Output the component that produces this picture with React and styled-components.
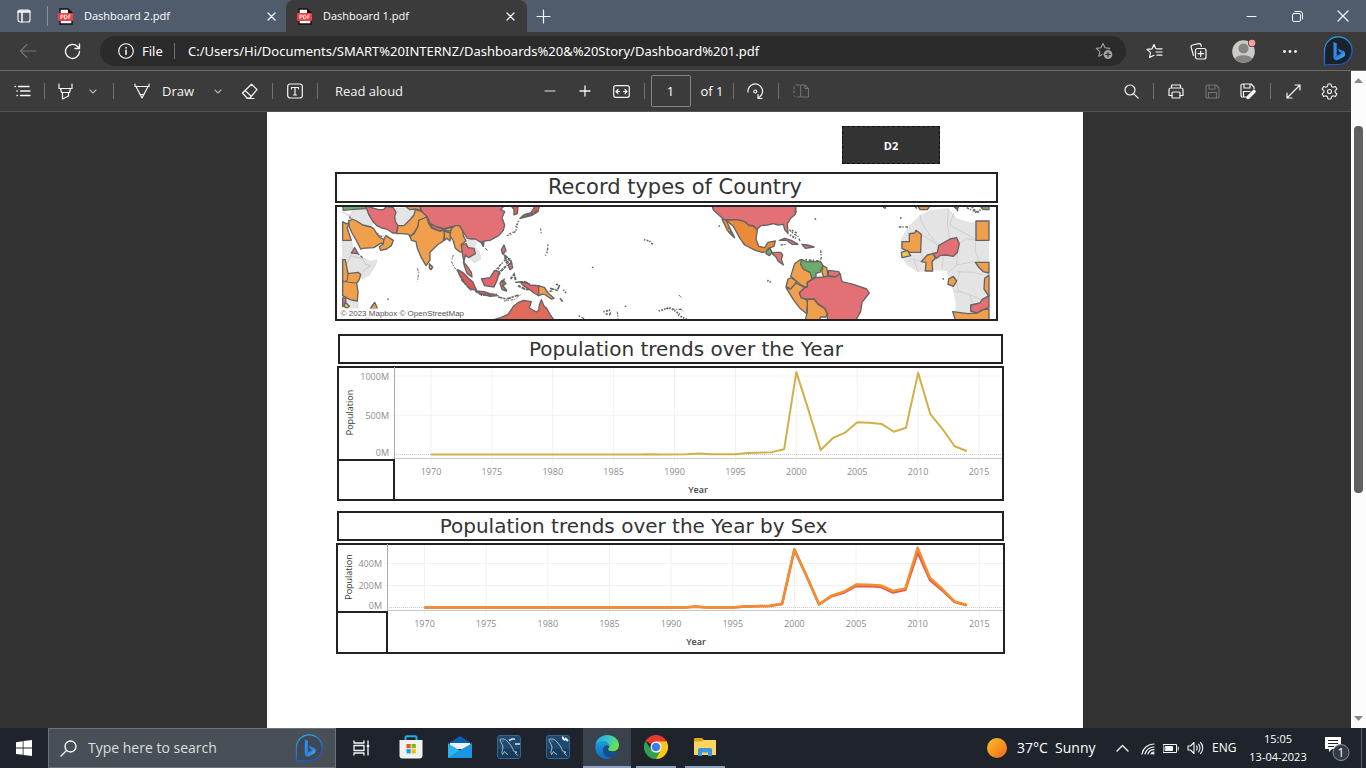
import React from "react";
import styled, { createGlobalStyle } from "styled-components";

const GlobalStyle = createGlobalStyle`
  *, *::before, *::after { box-sizing: border-box; }
  body { margin: 0; background: #323232; overflow: hidden; }
  button, input { font: inherit; color: inherit; }
`;

const Shell = styled.div`
  display: flex;
  flex-direction: column;
  height: 100vh;
  font-family: "Open Sans", "Noto Sans", sans-serif;
  font-size: 13px;
  line-height: 20px;
  color: #fff;
`;

const Button = styled.button`
  display: flex;
  align-items: center;
  justify-content: center;
  flex: none;
  width: ${(p) => p.$w || 44}px;
  height: 100%;
  padding: 0;
  border: 0;
  background: none;
  color: ${(p) => (p.disabled ? "#747474" : "#f4f4f4")};
`;

const Divider = styled.span`
  flex: none;
  width: 1px;
  height: ${(p) => p.$h || 16}px;
  background: ${(p) => p.$c || "#717171"};
`;

/* ---------- tabs ---------- */

const TabStrip = styled.header`
  display: flex;
  align-items: center;
  flex: none;
  height: 32px;
  background: #505c6b;
`;

const Tab = styled.div`
  display: flex;
  align-items: center;
  width: ${(p) => (p.$active ? 241 : 238)}px;
  height: 32px;
  padding-left: ${(p) => (p.$active ? 11 : 10)}px;
  font-size: 11px;
  border-radius: 8px 8px 0 0;
  background: ${(p) => (p.$active ? "#3b3b3b" : "transparent")};
`;

const TabTitle = styled.span`
  flex: 1;
  padding-left: 11px;
  white-space: nowrap;
`;

const WindowControls = styled.div`
  display: flex;
  height: 100%;
  margin-left: auto;
`;

/* ---------- address bar ---------- */

const AddressBar = styled.nav`
  display: flex;
  align-items: center;
  flex: none;
  height: 39px;
  padding: 0 2px 0 6px;
  background: #3b3b3b;
  border-bottom: 1px solid #6a6a6a;
`;

const AddressPill = styled.div`
  display: flex;
  align-items: center;
  flex: 1;
  height: 30px;
  margin: 0 6px;
  padding-left: 18px;
  border-radius: 15px;
  background: #2b2b2b;
  font-family: "Noto Sans", "Open Sans", sans-serif;
`;

const Scheme = styled.span`
  width: 40px;
  padding-left: 8px;
`;

const UrlInput = styled.input`
  flex: 1;
  min-width: 0;
  padding: 0 0 0 13px;
  border: 0;
  outline: 0;
  background: none;
`;

/* ---------- viewer ---------- */

const Main = styled.main`
  display: flex;
  flex: 1;
  min-height: 0;
`;

const Viewer = styled.div`
  display: flex;
  flex-direction: column;
  flex: 1;
  min-width: 0;
`;

const Toolbar = styled.div`
  display: grid;
  grid-template-columns: 1fr auto 1fr;
  flex: none;
  height: 41px;
  background: #3b3b3b;
  border-bottom: 1px solid #555;
`;

const ToolGroup = styled.div`
  display: flex;
  align-items: center;
  justify-content: ${(p) => (p.$end ? "flex-end" : "flex-start")};
  padding-right: ${(p) => (p.$end ? 8 : 0)}px;
`;

const DrawButton = styled(Button)`
  justify-content: flex-start;
  gap: 12px;
  padding-left: 20px;
`;

const ChevronButton = styled(Button)`
  width: 16px;
  color: #b5b5b5;
  margin-right: ${(p) => (p.$gap ? 12 : 0)}px;
`;

const PageInput = styled.input`
  width: 40px;
  height: 32px;
  margin-left: 6px;
  padding: 0;
  text-align: center;
  border: 1px solid #858585;
  border-radius: 2px;
  outline: 0;
  background: none;
`;

const PageCount = styled.span`
  width: 42px;
  padding-left: 10px;
`;

const Canvas = styled.div`
  flex: 1;
  min-height: 0;
  overflow: hidden;
  padding-right: 1px;
  background: #323232;
`;

const Paper = styled.article`
  display: flex;
  flex-direction: column;
  align-items: flex-start;
  width: 816px;
  min-height: 100%;
  margin: 0 auto;
  padding: 14px 78px 0 68px;
  background: #fff;
`;

const ScrollTrack = styled.div`
  display: flex;
  flex-direction: column;
  align-items: center;
  flex: none;
  width: 15px;
  padding: 7px 0;
  background: #fcfcfc;
`;

const ScrollThumb = styled.div`
  width: 9px;
  height: 57%;
  margin: 43px 0 auto;
  border-radius: 4px;
  background: #606060;
`;

/* ---------- dashboard ---------- */

const LinkTile = styled.button`
  width: 98px;
  height: 38px;
  margin: 0 65px 8px 0;
  padding-top: 2px;
  align-self: flex-end;
  border: 1px dashed #111;
  background: #333;
  color: #fff;
  font-size: 11px;
  font-weight: 700;
`;

const Panel = styled.section`
  width: ${(p) => p.$w}px;
  margin: 0 0 ${(p) => p.$after}px ${(p) => p.$indent || 0}px;
`;

const PanelTitle = styled.h2`
  height: ${(p) => p.$h || 30}px;
  margin: 0 ${(p) => p.$inset || 0}px 2px;
  padding: 0 ${(p) => p.$right || 0}px 0 ${(p) => p.$left || 0}px;
  border: 2px solid #222;
  font-family: "DejaVu Sans", sans-serif;
  font-size: ${(p) => (p.$large ? 21 : 20)}px;
  font-weight: 400;
  line-height: 26px;
  text-align: center;
  white-space: nowrap;
  color: #333;
`;

const MapFrame = styled.div`
  border: 2px solid #222;
  svg { display: block; width: 100%; height: auto; }
`;

const ChartSvg = styled.svg`
  display: block;
  width: 100%;
  height: auto;
  font-family: "Open Sans", "Noto Sans", sans-serif;
  font-size: 9px;
`;

/* ---------- taskbar ---------- */

const Taskbar = styled.footer`
  display: flex;
  align-items: center;
  flex: none;
  height: 40px;
  background: #1f242c;
`;

const SearchBox = styled.label`
  display: flex;
  align-items: center;
  width: 288px;
  height: 40px;
  padding: 0 12px 0 11px;
  border: 1px solid #6c7178;
  background: #484f57;
`;

const SearchInput = styled.input`
  flex: 1;
  min-width: 0;
  padding: 0 0 0 11px;
  border: 0;
  outline: 0;
  background: none;
  font-size: 14px;
  &::placeholder { color: #dcdedf; opacity: 1; }
`;

const AppCell = styled.button`
  display: grid;
  grid-template-rows: 38px 2px;
  justify-items: center;
  align-items: center;
  width: 48px;
  height: 40px;
  margin-right: 1px;
  padding: 0;
  border: 0;
  background: ${(p) => (p.$active ? "#3a424e" : "none")};
  &::after {
    content: "";
    width: ${(p) => (p.$active ? 48 : 40)}px;
    height: 2px;
    background: ${(p) => (p.$running ? "#8ea3c0" : "transparent")};
  }
`;

const Tray = styled.div`
  display: flex;
  align-items: center;
  height: 100%;
  margin-left: auto;
  padding-right: 4px;
`;

const Weather = styled.button`
  display: flex;
  align-items: center;
  gap: 10px;
  width: 121px;
  padding: 0;
  border: 0;
  background: none;
  font-size: 14px;
  white-space: nowrap;
`;

const Clock = styled.time`
  width: 70px;
  font-size: 11px;
  line-height: 18px;
  text-align: center;
`;

const Lang = styled.span`
  width: 36px;
  padding-left: 5px;
  font-size: 12px;
`;

/* ---------- icons ---------- */

const Ico = ({ w = 16, h, sw = 1, children, vb }) => (
  <svg width={w} height={h || w} viewBox={vb || `0 0 ${w} ${h || w}`} fill="none" stroke="currentColor" strokeWidth={sw} strokeLinecap="round" strokeLinejoin="round" aria-hidden="true">
    {children}
  </svg>
);

const Pdf = () => (
  <svg width="15" height="17" viewBox="0 0 15 17" aria-hidden="true">
    <path d="M2 1h8l4 4v11H2z" fill="#fff" stroke="#111" strokeWidth="1.4" />
    <path d="M10 1v4h4z" fill="#111" />
    <rect x="0" y="5" width="15" height="8" rx="1" fill="#f23f43" />
    <path d="M3 11V7h1.2a1.1 1.1 0 0 1 0 2.3H3M6.6 7v4h.7a1.8 2 0 0 0 0-4zM12.5 7H10.800v4M10.800 9h1.500" fill="none" stroke="#fff" strokeWidth=".9" />
  </svg>
);
const Close = ({ s = 9 }) => <Ico w={s} sw={1.3}><path d={`M1 1 ${s - 1} ${s - 1}M${s - 1} 1 1 ${s - 1}`} /></Ico>;
const Chevron = () => <Ico w={8} h={5} sw={1.1}><path d="M1 1l3 3 3-3" /></Ico>;

const Bing = ({ s = 30, fill = "#1c222b" }) => (
  <svg width={s} height={s} viewBox="0 0 30 30" aria-hidden="true">
    <defs>
      <linearGradient id="ring" x1="0" y1="0" x2=".4" y2="1"><stop offset="0" stopColor="#27b5e8" /><stop offset="1" stopColor="#1c55d8" /></linearGradient>
      <linearGradient id="bee" x1="0" y1="0" x2="1" y2="1"><stop offset="0" stopColor="#2d9cf4" /><stop offset=".5" stopColor="#2a7bea" /><stop offset="1" stopColor="#39dfd0" /></linearGradient>
    </defs>
    <path d="M1.500 29V15A13.800 13.800 0 1 1 15 28.500H8C6 28.500 4 29 1.500 29z" fill={fill} stroke="url(#ring)" strokeWidth="1.2" />
    <path d="M10.500 6l3.200 1.200v12.600l-3.200 2z" fill="#2e8df2" />
    <path d="M10.500 21.500l3.500-2 4.500-2.300-2.200-1.100-1.400-3.400 5.700 2.200c1.900 1 2.100 4.300.3 5.800l-6.400 3.300c-1.900.8-4-.5-4-2.500z" fill="url(#bee)" />
  </svg>
);

const MySql = ({ tool }) => (
  <svg width="24" height="24" viewBox="0 0 24 24" fill="none" aria-hidden="true">
    <rect x=".5" y=".5" width="23" height="23" rx="2.500" fill="#1e4a70" stroke="#34658f" />
    <path d="M1 14h22v7a2 2 0 0 1-2 2H3a2 2 0 0 1-2-2z" fill="#183b5b" />
    <path d="M3 4.500c3-1.500 6 0 8 2.500 2.500 3 4.500 5 5.500 9l3.500 1.200-2 .6 3 3M3 4.500c0 3 2.500 4 3 7.500.2 3-2 4.500-.5 7.500.800-.8 1.500-2 2-3 .8 1.500 2 2.500 3.500 3M5.500 5.800l1 .5" stroke="#b5c9d8" strokeWidth=".9" />
    {tool === "wrench"
      ? <path d="M22 6l-3-3M17 1.500c-.5 2 .5 3.500 2.500 3.200" stroke="#f5f8fa" strokeWidth="1.800" />
      : <path d="M12 5.500l3-1.500h3M18 9h5" stroke="#dce6ee" strokeWidth="1.700" />}
  </svg>
);

const Edge = () => (
  <svg width="24" height="24" viewBox="0 0 24 24" aria-hidden="true">
    <defs>
      <linearGradient id="e1" x1="0" y1="0" x2="1" y2=".4"><stop offset="0" stopColor="#22a2e0" /><stop offset=".55" stopColor="#34c6c4" /><stop offset="1" stopColor="#6be04f" /></linearGradient>
      <linearGradient id="e2" x1="0" y1="0" x2="0" y2="1"><stop offset="0" stopColor="#1b9de2" /><stop offset="1" stopColor="#1169b8" /></linearGradient>
    </defs>
    <path d="M.6 9C2 3.500 6.500 0 12 0c7 0 12 4.500 12 10 0 4-3 6.300-6.500 6.300-3 0-4.500-1-4.500-2 0-.7 1.300-1.300 1.300-3C14.300 8.500 11.500 7 9 7 4.500 7 1 9.500.6 9z" fill="url(#e1)" />
    <path d="M.2 11C1 8 4.500 5.500 9 6c3 .4 5.300 2.700 5.300 5.300C11 9.500 8 12 8 15.200c0 5 5 8.800 10 6.800C12 26.500 0 23.500.2 11z" fill="url(#e2)" />
    <path d="M8 15.200c0-3 2-5 4.500-5-.8 1.500-1.200 3.500.5 5.300 2.500 3 7 2.500 9.800.3.500-.3.800.1.500.6C20 23 8.500 24.500 8 15.200z" fill="#124f95" />
  </svg>
);

const Chrome = () => (
  <svg width="24" height="24" viewBox="0 0 24 24" aria-hidden="true">
    <path d="M12 12L1.600 6A12 12 0 0 1 22.400 6z" fill="#e33b2e" />
    <path d="M12 12L22.400 6A12 12 0 0 1 12 24z" fill="#fcc61a" />
    <path d="M12 6.600h10.700L16.800 14.800zM12 24l5-9.200-5 2.700z" fill="#fcc61a" />
    <path d="M1.600 6l5.600 8.800L12 17.400 16 17l-4 7A12 12 0 0 1 1.600 6z" fill="#30a350" />
    <circle cx="12" cy="12" r="5.500" fill="#fff" />
    <circle cx="12" cy="12" r="4.300" fill="#3b7ded" />
  </svg>
);

const Gear = () => (
  <Ico w={17} sw={1.1}>
    <path d="M7 1h3l.5 2.400 1.500.9 2.400-.8 1.500 2.600-1.800 1.600v1.700l1.800 1.600-1.500 2.600-2.400-.8-1.500.9L10 16H7l-.5-2.300-1.500-.9-2.400.8-1.500-2.600 1.800-1.600V7.700L1.100 6.100l1.500-2.600 2.400.8 1.500-.9z" />
    <circle cx="8.500" cy="8.500" r="2" />
  </Ico>
);

/* ---------- world map ---------- */

const OR = "#f09f4c";
const RED = "#e27075";
const GREEN = "#6cab69";
const GREY = "#e4e4e4";

const westLand = [
  [GREEN, "38,123 107,123 108,131 72,133 40,136"],
  [OR, "38,170 48,176 56,174 52,190 64,226 38,226"],
  [OR, "56,170 66,162 80,168 98,180 124,186 132,192 140,206 150,218 160,222 162,234 150,236 132,248 98,250 92,252 80,228 66,204 58,186"],
  [OR, "162,222 168,212 190,226 184,242 170,252 152,256 148,246 160,236"],
  [RED, "107,123 112,124 132,130 146,134 160,134 170,124 190,128 198,142 194,155 196,170 204,182 200,204 188,204 170,192 158,190 140,182 128,168 116,148"],
  [OR, "204,182 222,182 236,168 242,162 252,150 256,134 276,140 290,150 288,160 268,166 266,180 252,204 240,216 236,208 216,206 200,206"],
  ["#e99845", "226,123 270,123 272,136 256,132 240,134 232,128"],
  ["#e27075", "270,123 522,123 512,134 524,140 516,158 524,180 520,196 506,212 480,226 462,228 452,232 436,222 424,222 412,220 398,198 388,182 368,184 342,192 320,186 300,176 292,156 276,140"],
  [OR, "266,166 290,156 296,176 306,190 330,198 344,196 344,210 340,228 322,240 300,262 300,286 288,302 274,278 262,250 258,230 244,226 240,214 252,206 264,184"],
  [RED, "300,176 320,186 342,192 330,198 306,188"],
  [OR, "342,198 362,204 360,228 350,220 344,226"],
  [OR, "344,192 366,186 364,198 350,198"],
  [OR, "364,190 376,182 388,182 398,198 400,212 408,228 394,238 402,256 400,262 388,260 376,250 370,228 360,212"],
  [RED, "394,240 408,236 414,248 432,250 436,266 416,278 406,270 402,290 398,272"],
  [RED, "400,290 410,302 424,322 426,336 412,326 404,306"],
  ["#e0575c", "382,314 398,322 414,338 428,350 440,376 420,372 404,352 390,332"],
  ["#e0575c", "438,378 462,380 480,386 504,392 480,394 450,386"],
  ["#e2656a", "454,342 480,338 494,316 508,320 502,344 492,366 464,362"],
  [RED, "510,354 520,346 528,356 518,362 530,378 516,374"],
  [RED, "514,254 522,240 528,258 518,266"],
  [RED, "534,300 544,292 548,308 540,314"],
  [RED, "454,234 462,232 460,244"],
  ["#e2656a", "570,350 592,354 600,360 626,362 626,392 612,384 596,372 580,362"],
  [OR, "626,362 644,368 652,382 672,400 664,402 644,388 636,388 626,392"],
  ["#e16b5a", "488,465 512,458 534,448 550,424 566,412 580,406 604,410 598,429 620,441 626,436 628,420 634,404 642,423 650,430 660,448 672,465"],
  ["#e0624f", "544,123 564,123 562,146 552,150 552,134"],
  ["#e0624f", "570,160 584,148 602,144 612,130 612,123 628,123 624,140 604,152 580,158"],
  [OR, "38,284 46,284 54,326 84,322 92,328 88,344 80,354 84,380 82,408 60,404 38,392"],
  [RED, "64,264 74,248 84,266"],
  [RED, "38,398 48,400 46,420 38,424"],
  ["#e5c44e", "46,412 58,424 50,430 42,424"],
  [OR, "120,432 134,412 142,430"],
  [OR, "104,463 112,458 130,465"],
  [OR, "298,296 308,306 304,314 298,310"],
];

const westGrey = [
  "40,142 60,150 70,134 108,130 118,150 132,172 124,184 98,178 66,162",
  "198,130 232,128 256,134 252,150 240,165 222,182 200,180 194,155",
  "408,228 430,222 440,236 434,244 448,262 452,282 432,294 420,280 436,266 432,250 414,248",
  "38,228 64,228 70,250 62,268 84,266 98,278 122,290 140,284 136,302 118,330 96,342 84,322 54,326 38,284",
  "38,408 84,408 84,430 38,430",
];

const borderLines = [
  "38,348 58,352 80,354", "54,326 52,346 38,352", "346,440 352,465",
];

const eastLand = [
  [RED, "66,123 318,123 316,148 302,160 292,176 294,206 284,194 280,178 264,180 250,176 232,180 212,182 200,194 190,182 176,180 164,170 140,164 102,164 84,148 70,134"],
  ["#eb8a38", "96,163 108,164 120,190 134,218 124,210 112,196"],
  ["#eb8a38", "108,166 140,164 164,170 178,182 192,184 202,196 198,222 206,244 224,248 234,232 256,228 252,244 234,250 232,260 216,262 196,256 164,240 150,220 130,184"],
  [GREEN, "230,256 240,250 246,262 238,272 228,266"],
  [RED, "244,264 256,262 272,262 278,270 274,284 280,300 264,288 258,276"],
  [RED, "268,226 284,220 304,226 324,238 306,238 290,226"],
  [RED, "336,238 352,240 372,246 346,250"],
  [OR, "314,296 330,284 340,286 334,298 340,312 360,322 374,338 352,352 352,368 336,362 316,346 302,334"],
  [GREEN, "334,284 350,290 392,290 400,304 390,322 378,324 378,338 366,340 360,322 340,312 332,298"],
  [OR, "398,302 410,308 414,332 402,338 396,322"],
  [RED, "416,316 446,320 452,330 436,336 414,332"],
  [OR, "294,342 304,338 318,348 318,356 302,372 288,364"],
  [OR, "288,368 302,372 318,354 334,362 344,368 328,384 334,398 346,402 354,410 350,446 330,430 310,404"],
  [OR, "352,404 372,402 384,418 404,430 412,446 408,456 392,456 388,465 346,465 352,440"],
  [RED, "328,384 344,368 352,366 352,352 376,338 400,336 416,334 436,336 450,326 456,350 490,358 530,372 538,384 516,412 512,440 498,465 412,465 412,444 404,430 384,416 372,402 346,402 334,398"],
  [OR, "636,230 658,230 658,206 674,204 678,196 694,208 692,262 660,262 636,250"],
  ["#e8c752", "634,262 652,256 662,272 636,278"],
  [RED, "726,266 742,262 746,242 780,222 800,218 808,236 802,262 790,274 768,270 750,272 740,280"],
  [OR, "694,290 712,270 730,266 736,280 726,290 728,318 706,318 708,292"],
  [OR, "858,168 897,168 897,226 858,226"],
  [OR, "776,342 790,334 800,348 790,364 774,358"],
  [OR, "856,292 897,292 897,324 880,320 866,306"],
  [OR, "884,340 897,330 897,394 882,372"],
  [RED, "842,420 870,414 876,404 897,392 897,428 880,434 862,444 842,438"],
  [OR, "788,440 834,446 862,444 880,434 897,432 897,465 796,465"],
  ["#e99845", "684,123 720,123 712,134 690,134"],
  [RED, "790,123 806,123 802,134"],
  [GREEN, "870,123 897,123 897,134 880,134"],
];

const africaLines = [
  "690,150 694,170 720,212 746,242", "775,132 772,180 780,222", "790,146 780,180 856,222", "858,170 856,260 870,292",
  "694,208 746,242", "692,262 700,280", "808,236 830,220 856,226", "802,262 800,300 776,322", "760,276 756,310", "800,300 850,290",
  "800,320 850,322 880,330", "800,350 806,378 840,390 846,412", "790,380 816,382", "840,390 876,404", "810,320 800,350",
  "834,446 866,465", "654,290 670,280 684,320", "672,284 700,290",
];

const islandChains = [
  "384,318 396,346 410,362 424,376", "436,378 456,390 500,388", "504,396 530,402 548,396 566,390",
  "516,262 530,278 544,290", "522,270 542,284 546,300", "528,290 540,298", "524,276 530,292 540,284",
  "506,330 512,318 532,300", "512,350 522,344 518,362 530,376", "542,342 552,328 558,348", "556,352 584,350 600,358",
  "564,362 584,372 600,374", "660,370 682,376 688,362 676,356", "576,156 604,148 622,138", "690,400 698,410",
];

const specks = [
  "370,270 364,288 372,306 382,318", "500,312 520,290 530,280", "498,318 508,308",
  "522,408 552,404 576,386", "538,206 556,200 562,186", "566,168 556,190", "530,212 548,208",
  "648,380 668,378", "700,374 708,384", "632,190 634,206", "654,238 652,260 646,272", "942,224 958,228 970,240",
  "1046,390 1056,398", "746,452 764,462", "820,440 838,436 842,450 824,446", "862,440 864,462", "884,424 892,424",
  "986,438 1020,428 1050,448", "1006,430 1028,432 1054,434", "786,306 792,310", "1044,450 1072,464", "1050,430 1060,440",
  "142,204 148,212 160,216", "56,168 62,152", "262,310 266,322 262,350", "84,266 98,278", "172,402 176,404", "466,250 474,258",
];

const eastSpecks = [
  "298,194 310,206 324,214 330,228", "306,196 320,204", "300,210 318,220", "392,256 394,278 390,288", "346,284 386,288", "318,236 324,238",
  "374,160 378,164", "570,123 590,130", "232,346 242,352", "626,186 654,186", "630,160 636,158", "846,126 860,144 876,130", "830,128 846,136 864,140",
  "116,188 130,214", "86,182 90,186", "272,240 288,238", "758,340 764,346", "316,130 318,146", "676,124 682,134", "796,126 804,138",
];

const Land = ({ items }) => items.map(([fill, points], i) => <polygon key={i} points={points} fill={fill} stroke="#646464" strokeWidth="4" strokeLinejoin="round" />);
const Specks = ({ items, weight = 3 }) => items.map((points, i) => <polyline key={i} points={points} fill="none" stroke="#666" strokeWidth={weight + (i % 3)} strokeDasharray={["8 3 4 5", "5 5 9 3", "4 4 6 3"][i % 3]} />);
const Islands = ({ items }) => items.map((points, i) => <polyline key={i} points={points} fill="none" stroke="#666" strokeWidth={5 + (i % 2)} strokeDasharray={["14 2 7 3", "9 3 12 2"][i % 2]} />);

const WorldMap = () => (
  <svg viewBox="21 126 1977 336" role="img" aria-label="Record types of Country map">
    {westGrey.map((p) => <polygon key={p} points={p} fill={GREY} stroke="#d3d3d3" strokeWidth="2" />)}
    <polyline points="50,300 62,272 98,282 106,298 122,302 98,320" fill="none" stroke="#b9b9b9" strokeWidth="2" />
    <Land items={westLand} />
    {borderLines.map((p) => <polyline key={p} points={p} fill="none" stroke="#646464" strokeWidth="3" />)}
    <Islands items={islandChains} />
    <Specks items={specks} />
    <g transform="translate(1080 0)">
      <polygon points="632,224 650,190 690,150 720,136 775,130 790,146 800,160 840,172 897,170 897,465 790,465 798,420 790,380 776,340 770,318 720,314 684,322 650,300 632,272" fill={GREY} />
      {africaLines.map((p) => <polyline key={p} points={p} fill="none" stroke="#c4c4c4" strokeWidth="2" />)}
      <Land items={eastLand} />
      <Specks items={eastSpecks} weight={4} />
    </g>
    <rect x="21" y="430" width="386" height="34" fill="#fff" fillOpacity=".8" />
    <text x="32" y="453" fontFamily="Liberation Sans, sans-serif" fontSize="24" fill="#555">© 2023 Mapbox © OpenStreetMap</text>
  </svg>
);

/* ---------- line charts ---------- */

const YEARS = [1970, 1975, 1980, 1985, 1990, 1995, 2000, 2005, 2010, 2015];

const total = [[1970, 0], [1987, 0], [1988, 3], [1989, 0], [1991, 2], [1992, 14], [1993, 3], [1995, 3], [1996, 20], [1998, 30], [1999, 68], [2000, 1050], [2001, 565], [2002, 58], [2003, 210], [2004, 278], [2005, 410], [2006, 405], [2007, 390], [2008, 290], [2009, 340], [2010, 1040], [2011, 515], [2012, 325], [2013, 105], [2014, 45]];
const male = [[1970, 0], [1991, 0], [1992, 8], [1993, 1], [1995, 1], [1996, 10], [1998, 15], [1999, 34], [2000, 530], [2001, 285], [2002, 29], [2003, 107], [2004, 143], [2005, 208], [2006, 206], [2007, 200], [2008, 150], [2009, 174], [2010, 542], [2011, 268], [2012, 168], [2013, 54], [2014, 22]];
const female = [[1970, 0], [1991, 0], [1992, 6], [1993, 1], [1995, 1], [1996, 9], [1998, 14], [1999, 32], [2000, 524], [2001, 282], [2002, 27], [2003, 102], [2004, 134], [2005, 196], [2006, 194], [2007, 188], [2008, 136], [2009, 160], [2010, 500], [2011, 250], [2012, 155], [2013, 50], [2014, 20]];

function LineChart({ width, height, axisX, split, x0, step, zero, scale, ticks, yearX, series, label, stroke }) {
  const px = (y) => x0 + (y - 1970) * step;
  const py = (v) => zero - v * scale;
  return (
    <ChartSvg viewBox={`0 0 ${width} ${height}`} role="img" aria-label={label}>
      {YEARS.map((y) => <line key={y} x1={px(y)} x2={px(y)} y1="2" y2={split + 4} stroke="#f1f1f1" strokeWidth="1" />)}
      {ticks.slice(1).map((t) => <line key={t} x1={axisX - 3} x2={width - 2} y1={py(t)} y2={py(t)} stroke="#f1f1f1" />)}
      <line x1={axisX} x2={width - 2} y1={zero} y2={zero} stroke="#ccc" strokeDasharray="1 1" />
      <rect x="1" y="1" width={width - 2} height={height - 2} fill="none" stroke="#222" strokeWidth="2" />
      <path d={`M1 ${split + 1}H${axisX}V${height - 1}`} fill="none" stroke="#222" strokeWidth="2" />
      <path d={`M${axisX} ${split - 0.5}H${width - 2}`} stroke="#c9c9c9" />
      <path d={`M${axisX + 0.5} 1V${split}`} stroke="#aaa" />
      {series.map(([color, data]) => (
        <polyline key={color} points={data.map(([x, v]) => `${px(x)},${py(v)}`).join(" ")} fill="none" stroke={color} strokeWidth={stroke} strokeLinejoin="round" />
      ))}
      {ticks.map((t) => <text key={t} x={axisX - 5} y={Math.floor(py(t)) + (t ? 4 : 2)} textAnchor="end" fill="#8c8c8c">{t}M</text>)}
      {YEARS.map((y) => <text key={y} x={px(y)} y={split + 16} textAnchor="middle" fill="#8c8c8c">{y}</text>)}
      <text x={yearX} y={split + 34} textAnchor="middle" fill="#444" fontWeight="600">Year</text>
      <text transform={`translate(16 ${split / 2}) rotate(-90)`} textAnchor="middle" fill="#333" fontWeight="500">Population</text>
    </ChartSvg>
  );
}

const StarPath = "M8 1.500l2 4.300 4.700.6-3.500 3.200.9 4.600L8 12l-4.100 2.200.9-4.600L1.300 6.400 6 5.800z";

export default function App() {
  return (
    <Shell>
      <GlobalStyle />
      <TabStrip>
        <Button $w={47} aria-label="Tab actions"><Ico w={14} sw={1.2}><rect x="1" y="1" width="12" height="12" rx="2" /><path d="M1 3h12M1.500 2h11M5 4v9" strokeWidth="1.600" /></Ico></Button>
        <Divider $h={20} $c="#87909b" />
        <Tab>
          <Pdf /><TabTitle>Dashboard 2.pdf</TabTitle>
          <Button $w={30} aria-label="Close tab"><Close /></Button>
        </Tab>
        <Tab $active>
          <Pdf /><TabTitle>Dashboard 1.pdf</TabTitle>
          <Button $w={34} aria-label="Close tab"><Close /></Button>
        </Tab>
        <Button $w={32} aria-label="New tab"><Ico w={15} sw={1.2}><path d="M7.500 1v13M1 7.500h13" /></Ico></Button>
        <WindowControls>
          <Button $w={46} aria-label="Minimize"><Ico w={11}><path d="M1 5.500h9" /></Ico></Button>
          <Button $w={46} aria-label="Restore"><Ico w={11}><rect x=".5" y="2.500" width="8" height="8" rx="1.500" /><path d="M3 .5h5a2.500 2.500 0 0 1 2.500 2.500v5" /></Ico></Button>
          <Button $w={46} aria-label="Close"><Close s={12} /></Button>
        </WindowControls>
      </TabStrip>

      <AddressBar>
        <Button disabled aria-label="Back"><Ico w={18} h={16} sw={1.2}><path d="M17 8H1.500M8 1.500L1.500 8 8 14.500" /></Ico></Button>
        <Button aria-label="Refresh"><Ico w={17} sw={1.4}><path d="M15.500 8.500a7 7 0 1 1-2-5l1.800 1.800M15.500 1v4.500H11" /></Ico></Button>
        <AddressPill>
          <Ico w={16} sw={1.1}><circle cx="8" cy="8" r="7.300" /><path d="M8 7.200v4M8 4.600v.3" strokeWidth="1.500" /></Ico>
          <Scheme>File</Scheme>
          <Divider />
          <UrlInput aria-label="Address" readOnly value="C:/Users/Hi/Documents/SMART%20INTERNZ/Dashboards%20&%20Story/Dashboard%201.pdf" />
          <Button aria-label="Add to favorites">
            <Ico w={18} sw={1.1}><g stroke="#a2a2a2"><path d={StarPath} /></g><circle cx="13" cy="12.500" r="5" fill="#a2a2a2" stroke="#2b2b2b" /><path d="M13 10.300v4.400M10.800 12.500h4.400" stroke="#2b2b2b" /></Ico>
          </Button>
        </AddressPill>
        <Button aria-label="Favorites"><Ico w={17} sw={1.2}><path d="M9.500 5.200L8 1.500 6 5.800l-5 .6 3.500 3.200-.9 4.900L8 12.300M10.500 5.800H16M10 9h6M11 12.200h5" /></Ico></Button>
        <Button aria-label="Collections"><Ico w={17} sw={1.2}><rect x="5.500" y="5.500" width="10.500" height="10.500" rx="2" /><path d="M10.700 8v5.500M8 10.700h5.500M3.500 12.500L1.200 4.500A2 2 0 0 1 2.500 2l6-1.300A2 2 0 0 1 11 2l.3 1.300" /></Ico></Button>
        <Button $w={48} aria-label="Profile">
          <svg width="24" height="24" viewBox="0 0 24 24" aria-hidden="true"><circle cx="11.500" cy="12.500" r="11.300" fill="#cdcbc8" /><circle cx="11.500" cy="9.500" r="5" fill="#868481" /><path d="M3 20c1-5 16-5 17 0a11.300 11.300 0 0 1-17 0z" fill="#868481" /><circle cx="20" cy="4" r="4" fill="#3b3b3b" /><circle cx="20" cy="4" r="3.300" fill="#ff9f9a" /></svg>
        </Button>
        <Button aria-label="More"><Ico w={14} h={3}><g fill="currentColor" stroke="none"><circle cx="1.500" cy="1.500" r="1.400" /><circle cx="7" cy="1.500" r="1.400" /><circle cx="12.500" cy="1.500" r="1.400" /></g></Ico></Button>
        <Button $w={52} aria-label="Bing"><Bing /></Button>
      </AddressBar>

      <Main>
        <Viewer>
          <Toolbar>
            <ToolGroup>
              <Button aria-label="Contents"><Ico w={17} h={12} sw={1.3}><path d="M4.500 1.500H15M6.500 6H16M6.500 10.500H16M1 1.500h.5M3 6h.5M3 10.500h.5" /></Ico></Button>
              <Divider />
              <Button $w={40} aria-label="Highlight"><Ico w={15} h={17} sw={1.2}><path d="M1 1v4.500h13V1M2.500 5.500l1 4h8l1-4M4.500 9.500v6.500l6-3V9.500" /></Ico></Button>
              <ChevronButton $gap aria-label="Highlight options"><Chevron /></ChevronButton>
              <Divider />
              <DrawButton $w={96}><Ico w={16} sw={1.2}><path d="M1 1v2.500h14V1M2 3.500L8 15l6-11.500M6 11.500h4" /></Ico>Draw</DrawButton>
              <ChevronButton aria-label="Draw options"><Chevron /></ChevronButton>
              <Button $w={46} aria-label="Erase"><Ico w={17} sw={1.2}><path d="M10.500 1.200L1.500 10l4.500 5h3l7-8.500zM4 7.500l6 5.500M6 15.500h7" /></Ico></Button>
              <Divider />
              <Button aria-label="Add text"><Ico w={16} sw={1.2}><rect x=".7" y="1" width="14.600" height="14" rx="2.500" /><path d="M4.500 6V4.500h7V6M8 4.500v7.500M6.500 12h3" /></Ico></Button>
              <Divider />
              <Button $w={102}>Read aloud</Button>
            </ToolGroup>
            <ToolGroup>
              <Button $w={42} aria-label="Zoom out"><Ico w={12} sw={1.3}><path d="M1 6h10" stroke="#aaa" /></Ico></Button>
              <Button $w={29} aria-label="Zoom in"><Ico w={12} sw={1.3}><path d="M1 6h10M6 1v10" /></Ico></Button>
              <Button aria-label="Fit to width"><Ico w={17} h={13} sw={1.2}><rect x=".7" y=".7" width="15.600" height="11.600" rx="2" /><path d="M3 6.500h3.500M10.500 6.500H14M5 4.500l-2 2 2 2M12 4.500l2 2-2 2" /></Ico></Button>
              <Divider />
              <PageInput aria-label="Page number" defaultValue="1" />
              <PageCount>of 1</PageCount>
              <Divider />
              <Button aria-label="Rotate"><Ico w={17} sw={1.2}><path d="M1 9a7.300 7.300 0 1 1 11 5.500M15 15.500h-4v-4" /><circle cx="8.300" cy="8.500" r="1.500" /></Ico></Button>
              <Divider />
              <Button disabled aria-label="Page view"><Ico w={16} h={14}><path d="M6.500 1H3M1 3v2M1 7v2M1 11.500L2.500 13M4.500 13h2M8 1h4l3.500 3.500V13H8zM12 1v3.500h3.500" /></Ico></Button>
            </ToolGroup>
            <ToolGroup $end>
              <Button aria-label="Find"><Ico w={15} sw={1.2}><circle cx="6" cy="6" r="5" /><path d="M9.800 9.800l4.400 4.400" /></Ico></Button>
              <Divider />
              <Button aria-label="Print"><Ico w={16} h={15} sw={1.2}><path d="M4 11.500H1V6a2 2 0 0 1 2-2h10a2 2 0 0 1 2 2v5.500h-3M3.500 4V1h9v3" /><rect x="4" y="8" width="8" height="6" rx="1" /></Ico></Button>
              <Button $w={28} disabled aria-label="Save"><Ico w={15} sw={1.1}><path d="M1 2.500A1.500 1.500 0 0 1 2.500 1H11l3 3v8.500a1.500 1.500 0 0 1-1.500 1.500h-10A1.500 1.500 0 0 1 1 12.500zM4 1v4h6V1M3.500 14V8.500h8V14" /></Ico></Button>
              <Button aria-label="Save as"><Ico w={16} sw={1.2}><path d="M6 14H2.500A1.500 1.500 0 0 1 1 12.500v-10A1.500 1.500 0 0 1 2.500 1H11l3 3v2M4 1v4h6V1M3.500 14V8.500H10" /><path d="M8 14.500l6-6" strokeWidth="3.500" /></Ico></Button>
              <Divider />
              <Button aria-label="Full screen"><Ico w={15} sw={1.2}><path d="M1 14L14 1M9 1h5v5M1 9v5h5" /></Ico></Button>
              <Button $w={28} aria-label="Settings"><Gear /></Button>
            </ToolGroup>
          </Toolbar>

          <Canvas>
            <Paper>
              <LinkTile>D2</LinkTile>
              <Panel $w={663} $after={13}>
                <PanelTitle $large $h={31} $left={17}>Record types of Country</PanelTitle>
                <MapFrame><WorldMap /></MapFrame>
              </Panel>
              <Panel $w={667} $after={10} $indent={2}>
                <PanelTitle $inset={1} $left={31}>Population trends over the Year</PanelTitle>
                <LineChart label="Population trends over the Year" width={667} height={135} axisX={57} split={93} x0={94} step={12.178} zero={88.5} scale={0.0785} ticks={[0, 500, 1000]} yearX={361} series={[["#d1b147", total]]} stroke={2} />
              </Panel>
              <Panel $w={669} $after={0} $indent={1}>
                <PanelTitle $inset={1} $right={74}>Population trends over the Year by Sex</PanelTitle>
                <LineChart label="Population trends over the Year by Sex" width={669} height={111} axisX={51} split={68} x0={88.5} step={12.33} zero={64.5} scale={0.11} ticks={[0, 200, 400]} yearX={360} series={[["#e15759", female], ["#f28e2b", male]]} stroke={2.5} />
              </Panel>
            </Paper>
          </Canvas>
        </Viewer>
        <ScrollTrack>
          <svg width="9" height="5" viewBox="0 0 9 5" aria-hidden="true"><path d="M0 5L4.500 0 9 5z" fill="#8a8a8a" /></svg>
          <ScrollThumb />
          <svg width="9" height="5" viewBox="0 0 9 5" aria-hidden="true"><path d="M0 0l4.500 5L9 0z" fill="#8a8a8a" /></svg>
        </ScrollTrack>
      </Main>

      <Taskbar>
        <Button $w={48} aria-label="Start"><svg width="16" height="16" viewBox="0 0 16 16" fill="#fff" aria-hidden="true"><path d="M0 2.200L6.700 1.200v6.300H0zM7.500 1.100L16 0v7.500H7.500zM0 8.400h6.700v6.400L0 13.900zM7.500 8.400H16V16l-8.500-1.100z" /></svg></Button>
        <SearchBox>
          <Ico w={17} sw={1.3}><circle cx="10.500" cy="6.500" r="5.500" /><path d="M6.500 10.500L1 16" /></Ico>
          <SearchInput aria-label="Search" placeholder="Type here to search" />
          <Bing s={28} fill="#3d4957" />
        </SearchBox>
        <Button $w={51} aria-label="Task view"><Ico w={17} h={16} sw={1.3}><path d="M1 1v2h10V1M1 15v-2h10v2M15 1v2.500M15 8.500V15" /><rect x="1" y="5.500" width="10" height="5" /><path d="M15 5.500v1" strokeWidth="2.500" /></Ico></Button>
        <AppCell aria-label="Microsoft Store">
          <svg width="24" height="24" viewBox="0 0 24 24" aria-hidden="true"><path d="M6.500 6V2.800A1.500 1.500 0 0 1 8 1.300h8a1.500 1.500 0 0 1 1.500 1.500V6" fill="none" stroke="#20aee5" strokeWidth="2" /><path d="M.5 5h23v15.500a3 3 0 0 1-3 3h-17a3 3 0 0 1-3-3z" fill="#f1f1f1" /><path d="M7.500 9h4.200v4.200H7.500z" fill="#f1511b" /><path d="M12.600 9h4.200v4.200h-4.200z" fill="#7fb900" /><path d="M7.500 14.200h4.200v4.200H7.500z" fill="#00a3ee" /><path d="M12.600 14.200h4.200v4.200h-4.200z" fill="#feb800" /></svg>
        </AppCell>
        <AppCell aria-label="Mail">
          <svg width="24" height="24" viewBox="0 0 24 24" aria-hidden="true"><path d="M0 8.500L12 1l12 7.500V12H0z" fill="#0a5cb5" /><path d="M2 8h20v6H2z" fill="#f1f1f1" /><path d="M0 8.500l12 7 12-7V22a1 1 0 0 1-1 1H1a1 1 0 0 1-1-1z" fill="#2db2ee" /><path d="M0 23l12-8 12-6.500V22a1 1 0 0 1-1 1z" fill="#1c95e0" /></svg>
        </AppCell>
        <AppCell aria-label="MySQL Shell"><MySql /></AppCell>
        <AppCell aria-label="MySQL Workbench"><MySql tool="wrench" /></AppCell>
        <AppCell $active $running aria-label="Microsoft Edge"><Edge /></AppCell>
        <AppCell $running aria-label="Google Chrome"><Chrome /></AppCell>
        <AppCell $running aria-label="File Explorer">
          <svg width="22" height="20" viewBox="0 0 22 20" aria-hidden="true"><path d="M0 2a1 1 0 0 1 1-1h7l2 2h11a1 1 0 0 1 1 1v14H0z" fill="#e4a20e" /><path d="M0 4.500h8L10 3h11a1 1 0 0 1 1 1v14H0z" fill="#fcd462" /><path d="M4 19v-6.500a1.500 1.500 0 0 1 1.500-1.500h11a1.500 1.500 0 0 1 1.500 1.500V19h-4v-3.500H8V19z" fill="#3d96dc" /></svg>
        </AppCell>
        <Tray>
          <Weather>
            <svg width="20" height="20" viewBox="0 0 20 20" aria-hidden="true"><defs><linearGradient id="sun" x1="0" y1="0" x2="1" y2="1"><stop offset="0" stopColor="#fbc02e" /><stop offset="1" stopColor="#f26a12" /></linearGradient></defs><circle cx="10" cy="10" r="10" fill="url(#sun)" /></svg>
            <span>37°C&nbsp; Sunny</span>
          </Weather>
          <Button $w={29} aria-label="Show hidden icons"><Ico w={13} h={8} sw={1.4}><path d="M1 7l5.500-5.500L12 7" /></Ico></Button>
          <Button $w={22} aria-label="Network"><Ico w={14} sw={1.2}><path d="M1 13A12 12 0 0 1 13 3M4 13a9 9 0 0 1 9-7M7 13a6 6 0 0 1 6-4.300M10 13a3 3 0 0 1 3-2" /><path d="M12 12.500h.5" strokeWidth="2" /></Ico></Button>
          <Button $w={24} aria-label="Battery"><Ico w={16} h={9}><rect x=".5" y=".5" width="13" height="8" /><path d="M15.200 3v3" /><path d="M2.500 2.500h7v4h-7z" fill="currentColor" /></Ico></Button>
          <Button $w={24} aria-label="Volume"><Ico w={17} h={14} sw={1.1}><path d="M1 5h2.500L7 1.500v11L3.500 9H1zM9.500 5c1 1 1 3 0 4M11.500 3.200c2 2 2 5.600 0 7.600M13.500 1.500c3 3 3 8 0 11" /></Ico></Button>
          <Lang>ENG</Lang>
          <Clock>15:05<br />13-04-2023</Clock>
          <Button $w={48} aria-label="Notifications">
            <svg width="25" height="25" viewBox="0 0 25 25" aria-hidden="true"><path d="M0 1h16v12H7l-3 3v-3H0z" fill="#fff" /><path d="M3 4.500h10M3 7.500h10M3 10.500h6" stroke="#1f242c" /><circle cx="16" cy="16.500" r="8" fill="#343b48" stroke="#8d939c" /><text x="16" y="21" textAnchor="middle" fontSize="12" fill="#fff">1</text></svg>
          </Button>
          <Divider $h={40} $c="#5a5f66" />
        </Tray>
      </Taskbar>
    </Shell>
  );
}
